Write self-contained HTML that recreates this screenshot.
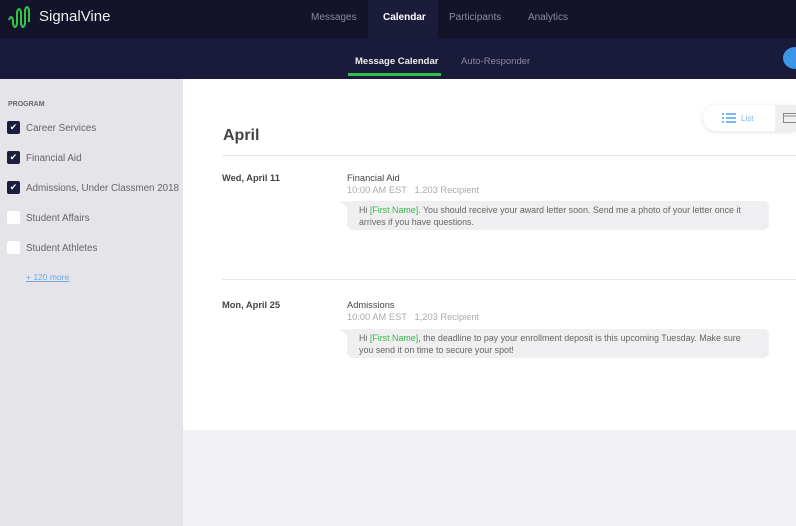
<!DOCTYPE html>
<html><head><style>
*{margin:0;padding:0;box-sizing:border-box}
body{width:796px;height:526px;overflow:hidden;font-family:"Liberation Sans",sans-serif;background:#f1f1f3;position:relative}
.top{position:absolute;left:0;top:0;width:796px;height:38px;background:#13132a}
.sub{position:absolute;left:0;top:38px;width:796px;height:41px;background:#1a1a3a}
.nav{position:absolute;top:12px;font-size:10px;color:#8a8aa0}
.side{position:absolute;left:0;top:79px;width:183px;height:447px;background:#e4e4e9}
.main{position:absolute;left:183px;top:79px;width:613px;height:351px;background:#fff}
.cb{position:absolute;left:7px;width:13px;height:13px;border-radius:2px;background:#1c1c3c;color:#fff;font-size:9px;text-align:center;line-height:13px}
.cb.off{background:#fff}
.lbl{position:absolute;left:26px;font-size:9.8px;color:#666}
.t{position:absolute;font-size:9.3px;color:#444}
.g{color:#aaa}
.bub{position:absolute;left:347px;width:422px;height:29px;background:#efeff2;border-radius:6px;font-size:8.9px;color:#666;padding:4px 12px;line-height:11.5px}
.bub:before{content:"";position:absolute;left:-7px;top:0;border-top:9px solid #efeff2;border-left:9px solid transparent}
.gr{color:#3cb44b}
</style></head><body>
<div class="top"></div>
<div style="position:absolute;left:368px;top:0;width:70px;height:38px;background:#1b1b3a"></div>
<svg style="position:absolute;left:7px;top:4px" width="26" height="26" viewBox="0 0 26 26"><path d="M2 16 Q4 10 6 16 L6 20 Q8 26 10 20 L10 8 Q12 2 14 8 L14 20 Q16 26 18 20 L18 6 Q20 0 22 6 L22 18" fill="none" stroke="#2fc44a" stroke-width="2"/></svg>
<div style="position:absolute;left:39px;top:8px;font-size:15px;color:#eee">SignalVine</div>
<div class="nav" style="left:311px">Messages</div>
<div class="nav" style="left:383px;color:#fff;font-weight:bold">Calendar</div>
<div class="nav" style="left:449px">Participants</div>
<div class="nav" style="left:528px">Analytics</div>
<div class="sub"></div>
<div class="nav" style="left:355px;top:56px;color:#eee;font-weight:bold;font-size:9.5px">Message Calendar</div>
<div style="position:absolute;left:348px;top:73px;width:93px;height:3px;background:#2fbf4a"></div>
<div class="nav" style="left:461px;top:56px;font-size:9.5px">Auto-Responder</div>
<div style="position:absolute;left:783px;top:47px;width:24px;height:22px;border-radius:50%;background:#3d95e8"></div>
<div class="side"></div>
<div style="position:absolute;left:8px;top:101px;font-size:7px;color:#666;font-weight:bold">PROGRAM</div>
<div class="cb" style="top:121px">✔</div><div class="lbl" style="top:123px">Career Services</div>
<div class="cb" style="top:151px">✔</div><div class="lbl" style="top:153px">Financial Aid</div>
<div class="cb" style="top:181px">✔</div><div class="lbl" style="top:183px">Admissions, Under Classmen 2018</div>
<div class="cb off" style="top:211px"></div><div class="lbl" style="top:213px">Student Affairs</div>
<div class="cb off" style="top:241px"></div><div class="lbl" style="top:243px">Student Athletes</div>
<div style="position:absolute;left:26px;top:272px;font-size:8.5px;color:#6aa9e8;text-decoration:underline">+ 120 more</div>
<div class="main"></div>
<div style="position:absolute;left:703px;top:105px;width:100px;height:26px;border-radius:13px;background:#fff;box-shadow:0 1px 5px rgba(0,0,0,.12)"></div>
<div style="position:absolute;left:775px;top:105px;width:30px;height:26px;background:#efeff1"></div>
<svg style="position:absolute;left:722px;top:113px" width="14" height="10"><g fill="#7ab6f2"><rect x="0" y="0" width="2" height="2"/><rect x="4" y="0" width="10" height="2"/><rect x="0" y="4" width="2" height="2"/><rect x="4" y="4" width="10" height="2"/><rect x="0" y="8" width="2" height="2"/><rect x="4" y="8" width="10" height="2"/></g></svg>
<div style="position:absolute;left:741px;top:114px;font-size:8px;color:#7ab6f2">List</div>
<svg style="position:absolute;left:783px;top:111px" width="13" height="12"><rect x="0.5" y="2.5" width="14" height="9" fill="none" stroke="#888"/><line x1="0" y1="5" x2="14" y2="5" stroke="#888"/></svg>
<div style="position:absolute;left:223px;top:127px;font-size:16px;font-weight:bold;color:#444">April</div>
<div style="position:absolute;left:222px;top:155px;width:574px;height:1px;background:#e8e8ea"></div>
<div class="t" style="left:222px;top:173px;font-weight:bold">Wed, April 11</div>
<div class="t" style="left:347px;top:173px">Financial Aid</div>
<div class="t g" style="left:347px;top:185px">10:00 AM EST &nbsp;&nbsp;1,203 Recipient</div>
<div class="bub" style="top:201px">Hi <span class="gr">[First Name]</span>. You should receive your award letter soon. Send me a photo of your letter once it arrives if you have questions.</div>
<div style="position:absolute;left:222px;top:279px;width:574px;height:1px;background:#e8e8ea"></div>
<div class="t" style="left:222px;top:300px;font-weight:bold">Mon, April 25</div>
<div class="t" style="left:347px;top:300px">Admissions</div>
<div class="t g" style="left:347px;top:312px">10:00 AM EST &nbsp;&nbsp;1,203 Recipient</div>
<div class="bub" style="top:329px">Hi <span class="gr">[First Name]</span>, the deadline to pay your enrollment deposit is this upcoming Tuesday. Make sure you send it on time to secure your spot!</div>
</body></html>
